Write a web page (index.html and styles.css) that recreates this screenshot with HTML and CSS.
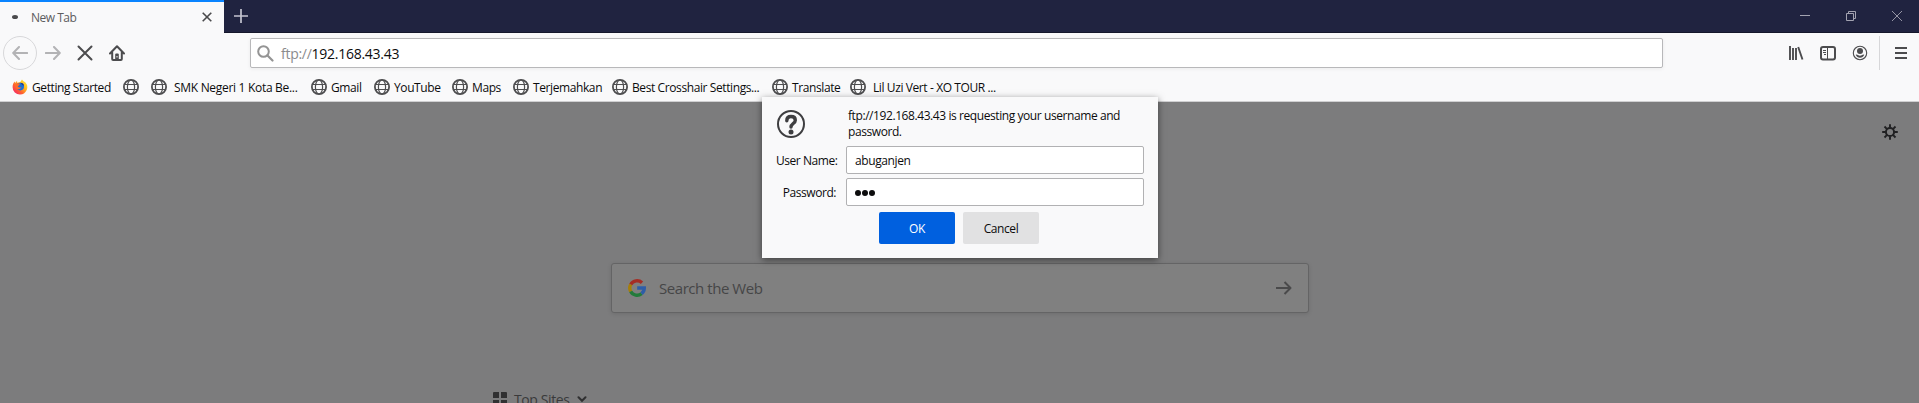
FILE: index.html
```html
<!DOCTYPE html>
<html lang="en">
<head>
<meta charset="utf-8">
<title>New Tab</title>
<link rel="stylesheet" href="styles.css">
</head>
<body>
<svg class="defs" aria-hidden="true">
  <symbol id="globe" viewBox="0 0 16 16">
    <g fill="none" stroke="#4e4e50">
      <circle cx="8" cy="8" r="7.1" stroke-width="1.8"/>
      <ellipse cx="8" cy="8" rx="3.6" ry="7" stroke-width="1.2"/>
      <path d="M1.500 5.500h13M1.500 10.500h13" stroke-width="1.2"/>
    </g>
  </symbol>
</svg>
<div class="browser">
  <header class="titlebar">
    <div class="tab">
      <span class="throbber"></span>
      <span class="tab-title">New Tab</span>
      <svg class="tab-close" width="10" height="10" viewBox="0 0 10 10"><path d="M.7.7l8.6 8.6M9.3.7L.7 9.3" stroke="#4a4a4c" stroke-width="1.6"/></svg>
    </div>
    <svg class="new-tab" width="14" height="14" viewBox="0 0 14 14"><path d="M7 0v14M0 7h14" stroke="#c4c4d0" stroke-width="1.7"/></svg>
    <div class="window-controls">
      <svg width="10" height="10" viewBox="0 0 10 10"><path d="M0 4.5h10" stroke="#a3a3b1"/></svg>
      <svg width="10" height="10" viewBox="0 0 10 10"><path d="M.5 2.5h7v7h-7zM2.500 2.500v-2h7v7h-2" fill="none" stroke="#a3a3b1"/></svg>
      <svg width="10" height="10" viewBox="0 0 10 10"><path d="M0 0l10 10M10 0L0 10" stroke="#a3a3b1" stroke-width=".9"/></svg>
    </div>
  </header>
  <nav class="toolbar">
    <div class="nav-buttons">
      <span class="back"><svg width="16" height="14" viewBox="0 0 16 14"><path d="M15.200 7H1.500M7 1L1.200 7L7 13" fill="none" stroke="#b3b3b5" stroke-width="2" stroke-linecap="round" stroke-linejoin="round"/></svg></span>
      <svg width="16" height="14" viewBox="0 0 16 14"><path d="M.8 7h13.700M9 1l5.800 6L9 13" fill="none" stroke="#b3b3b5" stroke-width="2" stroke-linecap="round" stroke-linejoin="round"/></svg>
      <svg width="16" height="16" viewBox="0 0 16 16"><path d="M1.500 1.500l13 13M14.500 1.500l-13 13" stroke="#4c4c4e" stroke-width="2" stroke-linecap="round"/></svg>
      <svg width="16" height="16" viewBox="0 0 16 16"><path d="M1 8.500L8 1.300l7 7.200M3.200 7.500V14q0 .9.9.9h7.800q.9 0 .9-.9V7.500" fill="none" stroke="#4c4c4e" stroke-width="2" stroke-linecap="round" stroke-linejoin="round"/><path d="M6.200 15V9.500q0-1 1-1h1.600q1 0 1 1V15z" fill="#4c4c4e"/><path d="M8 11v1.500" stroke="#f9f9fa"/></svg>
    </div>
    <div class="urlbar">
      <svg width="17" height="17" viewBox="0 0 17 17"><circle cx="6.500" cy="6.500" r="5.300" fill="none" stroke="#949494" stroke-width="2"/><path d="M10.500 10.500l5 5" stroke="#949494" stroke-width="2.200" stroke-linecap="round"/></svg>
      <span class="url"><span class="scheme">ftp://</span>192.168.43.43</span>
    </div>
    <div class="tools">
      <svg width="16" height="16" viewBox="0 0 16 16"><path d="M2 1v14M5 3v12M8 3v12M10.200 2l4.300 12.500" fill="none" stroke="#4c4c4e" stroke-width="1.900"/></svg>
      <svg width="16" height="16" viewBox="0 0 16 16"><rect x="1" y="2" width="14" height="12.500" rx="2" fill="none" stroke="#4c4c4e" stroke-width="2"/><path d="M7.500 2v12" stroke="#4c4c4e"/><path d="M3 5.500h3M3 7.500h3M4 9.500h2" stroke="#4c4c4e"/></svg>
      <svg width="16" height="16" viewBox="0 0 16 16"><circle cx="8" cy="8" r="6.700" fill="none" stroke="#4c4c4e" stroke-width="1.100"/><circle cx="8" cy="6" r="3" fill="#4c4c4e"/><path d="M3.700 9.800q1.300-.5 2.200.2q2.100 1.300 4.200 0q.9-.7 2.200-.2q-1.300 3-4.300 3t-4.300-3z" fill="#4c4c4e"/></svg>
      <span class="menu"><svg width="12" height="12" viewBox="0 0 12 12"><path d="M0 1h12M0 6h12M0 11h12" stroke="#4c4c4e" stroke-width="2"/></svg></span>
    </div>
  </nav>
  <div class="bookmarks">
    <span class="bookmark"><svg viewBox="0 0 16 16"><defs><linearGradient id="flame" x1="1" y1="0" x2="0" y2="1"><stop offset="0" stop-color="#fff04b"/><stop offset=".35" stop-color="#ffbd20"/><stop offset=".62" stop-color="#ff632e"/><stop offset="1" stop-color="#f0147c"/></linearGradient></defs><path d="M8 15.500A7.300 7.300 0 0 1 .6 8.200C.6 5.800 1.300 4 2.600 2.500L3.100 4l2-2.200v2L8.300 3 10 .4c1 2 2 1.500 3.500 3.200A7.200 7.200 0 0 1 8 15.500z" fill="url(#flame)"/><circle cx="8.200" cy="7.600" r="3.800" fill="#1970d4"/><path d="M3.500 5.500q2-2 4.500-.8l-.8 1.500-1.500 1q1.400 2.300 4 .8-1.500 2.800-4.200 2.200T3.500 5.500z" fill="#ff6a28"/><path d="M8.500 3.800q3 0 3.500 3l-1.800-.9z" fill="#25388c"/></svg><span class="name">Getting Started</span></span>
    <span class="bookmark"><svg><use href="#globe"/></svg></span>
    <span class="bookmark wide-gap loose"><svg><use href="#globe"/></svg><span class="name">SMK Negeri 1 Kota Be...</span></span>
    <span class="bookmark"><svg><use href="#globe"/></svg><span class="name">Gmail</span></span>
    <span class="bookmark"><svg><use href="#globe"/></svg><span class="name">YouTube</span></span>
    <span class="bookmark"><svg><use href="#globe"/></svg><span class="name">Maps</span></span>
    <span class="bookmark"><svg><use href="#globe"/></svg><span class="name">Terjemahkan</span></span>
    <span class="bookmark"><svg><use href="#globe"/></svg><span class="name">Best Crosshair Settings...</span></span>
    <span class="bookmark"><svg><use href="#globe"/></svg><span class="name">Translate</span></span>
    <span class="bookmark wide-gap"><svg><use href="#globe"/></svg><span class="name">Lil Uzi Vert - XO TOUR ...</span></span>
  </div>
  <main class="page">
    <div class="settings"><svg width="16" height="16" viewBox="0 0 16 16"><circle cx="8" cy="8" r="4.100" fill="none" stroke="#202022" stroke-width="2"/><path d="M8 .2v3.300M8 12.500v3.300M.2 8h3.300M12.500 8h3.300M2.500 2.500l2.300 2.300M11.200 11.200l2.300 2.300M13.500 2.500l-2.300 2.300M4.800 11.200l-2.300 2.300" stroke="#202022" stroke-width="1.900"/></svg></div>
    <div class="search">
      <svg width="18" height="18" viewBox="0 0 18 18"><g fill="none" stroke-width="3.400"><path d="M2.700 5.500A7.300 7.300 0 0 1 14 3.700" stroke="#a52d25"/><path d="M2.700 5.500a7.300 7.300 0 0 0 0 7" stroke="#a67e08"/><path d="M2.700 12.500A7.300 7.300 0 0 0 13.600 14.700" stroke="#237b3b"/><path d="M9.200 9h7.100q0 3.600-2.700 5.700" stroke="#2e5da8"/></g></svg>
      <span class="placeholder">Search the Web</span>
      <svg width="16" height="14" viewBox="0 0 16 14"><path d="M0 7h14.500M8.500 1l6 6-6 6" fill="none" stroke="#4a4a4b" stroke-width="2" stroke-linejoin="round"/></svg>
    </div>
    <div class="top-sites">
      <svg width="14" height="14" viewBox="0 0 14 14"><path d="M0 1q0-1 1-1h5v6H0zM8 0h5q1 0 1 1v5H8zM0 8h6v6H0zM8 8h6v6H8z" fill="#303031"/></svg>
      <span class="sites-title">Top Sites</span>
      <svg class="chevron" width="10" height="7" viewBox="0 0 10 7"><path d="M1.500 1.300L5 4.800l3.500-3.500" fill="none" stroke="#303031" stroke-width="2" stroke-linecap="round"/></svg>
    </div>
  </main>
  <section class="dialog">
    <div class="prompt">
      <svg width="28" height="28" viewBox="0 0 28 28"><circle cx="14" cy="14" r="13" fill="none" stroke="#3e3e40" stroke-width="2"/><path d="M9.800 10.700C9.800 7.800 11.500 6.500 14 6.500s4.300 1.400 4.300 3.700c0 3.300-4.300 3.300-4.300 6.800" fill="none" stroke="#3e3e40" stroke-width="3.400" stroke-linecap="round"/><circle cx="14" cy="21.900" r="2.500" fill="#3e3e40"/></svg>
      <p class="message">ftp://192.168.43.43 is requesting your username and<br>password.</p>
    </div>
    <div class="field"><label class="label">User Name:</label><div class="input">abuganjen</div></div>
    <div class="field"><label class="label">Password:</label><div class="input"><i class="dot"></i><i class="dot"></i><i class="dot"></i></div></div>
    <div class="actions"><button class="btn primary">OK</button><button class="btn">Cancel</button></div>
  </section>
</div>
</body>
</html>
```
FILE: styles.css
```css
* { box-sizing: border-box; }
body {
  margin: 0;
  font: 12px/16px "Open Sans", "Noto Sans", sans-serif;
  letter-spacing: -0.4px;
  color: #0c0c0d;
}
svg { display: block; flex: none; }
.defs { display: none; }
.browser {
  position: relative;
  display: flex;
  flex-direction: column;
  height: 403px;
  overflow: hidden;
  background: #f9f9fa;
}
.titlebar {
  display: flex;
  flex: none;
  align-items: center;
  height: 33px;
  background: #202340;
  box-shadow: inset 0 -1px #15172b;
}
.tab {
  display: flex;
  align-items: center;
  width: 224px;
  height: 33px;
  padding: 2px 12px 0;
  border-top: 2px solid #0a84ff;
  background: #f9f9fa;
}
.throbber { width: 6px; height: 4px; margin: -3px 0 0; border-radius: 50%; background: #4a4a4c; }
.tab-title { margin: -1px 0 0 13px; color: #5c5c5e; flex: 1; letter-spacing: -0.5px; }
.tab-close { margin-top: -3px; }
.new-tab { margin: -1px 0 0 10px; }
.window-controls { display: flex; gap: 36px; margin: -1px 17px 0 auto; }
.toolbar { display: flex; flex: none; align-items: center; height: 40px; padding: 0 12px 0 3px; }
.nav-buttons { display: flex; align-items: center; gap: 16px; width: 247px; }
.back {
  display: grid;
  place-items: center;
  width: 34px;
  height: 34px;
  margin-right: -8px;
  border: 1px solid #d8d8da;
  border-radius: 50%;
}
.urlbar {
  display: flex;
  align-items: center;
  width: 1413px;
  height: 30px;
  padding-left: 6px;
  border: 1px solid #b8b8ba;
  border-radius: 2px;
  background: #fff;
  box-shadow: 0 1px 4px rgba(0, 0, 0, .06);
}
.url { margin: 2px 0 0 7px; font-size: 14px; letter-spacing: -0.27px; color: #0c0c0d; }
.scheme { color: #8b8b8d; }
.tools { display: flex; align-items: center; gap: 16px; margin-left: auto; }
.menu { display: flex; align-items: center; height: 34px; padding-left: 15px; margin-left: -5px; border-left: 1px solid #d7d7d9; }
.bookmarks {
  display: grid;
  flex: none;
  grid-template-columns: 111px 28px 160px 63px 78px 61px 99px 160px 78px 150px;
  align-items: center;
  height: 29px;
  padding: 0 0 1px 12px;
  border-bottom: 1px solid #cfcfd1;
}
.bookmark { display: flex; align-items: center; gap: 4px; white-space: nowrap; }
.bookmark svg { width: 16px; height: 16px; }
.name { margin-top: 2px; }
.wide-gap { gap: 7px; }
.loose { letter-spacing: -0.3px; }
.page { flex: 1; min-height: 0; background: #7c7c7d; }
.settings { display: flex; justify-content: flex-end; height: 161px; padding: 22px 21px 0 0; }
.search {
  display: flex;
  align-items: center;
  width: 698px;
  height: 50px;
  margin-left: 611px;
  padding: 0 16px;
  border: 1px solid #646465;
  border-radius: 3px;
  background: #808080;
  box-shadow: 0 1px 4px rgba(0, 0, 0, .12);
}
.placeholder { flex: 1; margin-left: 13px; font-size: 15px; letter-spacing: -0.45px; color: #464647; }
.top-sites { display: flex; align-items: flex-start; margin: 79px 0 0 493px; color: #3a3a3b; }
.sites-title { width: 57px; margin: 0 0 0 7px; font-size: 14px; line-height: 16px; white-space: nowrap; }
.chevron { margin: 4px 0 0 6px; }
.dialog {
  position: absolute;
  left: 762px;
  top: 97px;
  width: 396px;
  height: 161px;
  padding: 10px 14px 14px;
  background: #f9f9fa;
  box-shadow: 0 2px 7px rgba(0, 0, 0, .5);
}
.prompt { display: flex; align-items: flex-start; height: 39px; }
.prompt svg { margin: 3px 0 0 1px; }
.message { margin: 1px 0 0 43px; white-space: nowrap; letter-spacing: -0.42px; }
.field { display: flex; align-items: center; height: 28px; margin-bottom: 4px; }
.label { width: 60px; text-align: right; white-space: nowrap; margin-top: 1px; letter-spacing: -0.45px; }
.input {
  display: flex;
  align-items: center;
  gap: 1px;
  width: 298px;
  height: 28px;
  margin-left: auto;
  padding: 2px 8px 0;
  border: 1px solid #b1b1b3;
  border-radius: 2px;
  background: #fff;
}
.dot { width: 6px; height: 6px; border-radius: 50%; background: #0c0c0d; }
.actions { display: flex; justify-content: center; gap: 8px; margin-top: 6px; padding-right: 2px; }
.btn {
  width: 76px;
  height: 32px;
  padding: 2px 0 0;
  border: 0;
  border-radius: 2px;
  background: #e1e1e2;
  color: #0c0c0d;
  font: inherit;
  letter-spacing: inherit;
}
.primary { background: #0060df; color: #fff; }
```
